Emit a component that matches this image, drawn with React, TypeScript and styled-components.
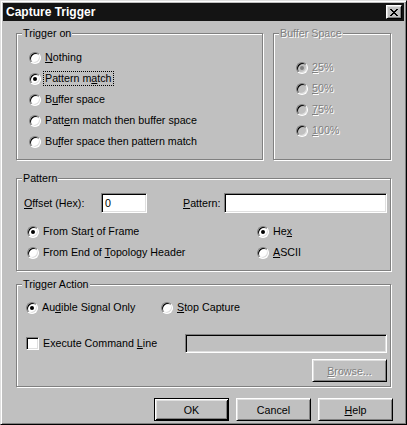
import React from "react";
import styled, { createGlobalStyle, css } from "styled-components";

const Global = createGlobalStyle`
  html, body { margin: 0; padding: 0; background: #c0c0c0; }
  body { font-family: "Liberation Sans", Arial, sans-serif; font-size: 10.7px; color: #000; }
  * { box-sizing: border-box; }
`;

const Window = styled.div`
  width: 407px;
  height: 425px;
  background: #c0c0c0;
  border: 1px solid;
  border-color: #dfdfdf #000 #000 #dfdfdf;
  box-shadow: inset 1px 1px 0 #fff, inset -1px -1px 0 #808080;
  padding: 2px;
  display: flex;
  flex-direction: column;
`;

const TitleBar = styled.div`
  height: 18px;
  flex: none;
  background: #141414;
  display: flex;
  align-items: center;
  justify-content: space-between;
  padding: 0 2px 0 3px;
`;

const Title = styled.span`
  color: #fff;
  font-weight: bold;
  font-size: 12px;
  line-height: 18px;
`;

const CloseButton = styled.div`
  width: 16px;
  height: 14px;
  background: #c0c0c0;
  border: 1px solid;
  border-color: #fff #000 #000 #fff;
  box-shadow: inset 1px 1px 0 #dfdfdf, inset -1px -1px 0 #808080;
  display: flex;
  align-items: center;
  justify-content: center;
`;

const Body = styled.div`
  flex: 1;
  display: flex;
  flex-direction: column;
  padding: 12px 13px 3px 13px;
`;

const TopRow = styled.div`
  display: flex;
  gap: 10px;
`;

const Group = styled.div<{ $pad: string; $width?: number; $mt?: number }>`
  position: relative;
  border: 1px solid #808080;
  box-shadow: 1px 1px 0 #fff, inset 1px 1px 0 #fff;
  padding: ${(p) => p.$pad};
  ${(p) => (p.$width ? `width: ${p.$width}px; flex: none;` : "flex: 1;")}
  margin-top: ${(p) => p.$mt ?? 0}px;
`;

const Legend = styled.span<{ $disabled?: boolean }>`
  position: absolute;
  top: -7px;
  left: 5px;
  padding: 0 1px;
  background: #c0c0c0;
  line-height: 13px;
  ${(p) =>
    p.$disabled &&
    css`
      color: #808080;
      text-shadow: 1px 1px 0 #fff;
    `}
`;

const Option = styled.label<{ $disabled?: boolean; $width?: number }>`
  display: flex;
  align-items: center;
  gap: 4px;
  height: 21px;
  white-space: nowrap;
  ${(p) => (p.$width ? `width: ${p.$width}px; flex: none;` : "")}
  ${(p) =>
    p.$disabled &&
    css`
      color: #808080;
      text-shadow: 1px 1px 0 #fff;
    `}
`;

const RadioCircle = styled.span<{ $checked?: boolean; $disabled?: boolean }>`
  position: relative;
  flex: none;
  width: 12px;
  height: 12px;
  border-radius: 50%;
  background: ${(p) => (p.$disabled ? "#c0c0c0" : "#fff")};
  border: 1px solid;
  border-color: #808080 #fff #fff #808080;
  box-shadow: inset 1px 1px 0 #000, inset -1px -1px 0 #dfdfdf;
  &::after {
    content: "";
    display: ${(p) => (p.$checked ? "block" : "none")};
    position: absolute;
    left: 3px;
    top: 3px;
    width: 4px;
    height: 4px;
    border-radius: 50%;
    background: ${(p) => (p.$disabled ? "#808080" : "#000")};
  }
`;

const CheckBox = styled.span`
  flex: none;
  width: 13px;
  height: 13px;
  background: #fff;
  border: 1px solid;
  border-color: #808080 #fff #fff #808080;
  box-shadow: inset 1px 1px 0 #000, inset -1px -1px 0 #dfdfdf;
`;

const OptionText = styled.span<{ $focus?: boolean }>`
  line-height: 13px;
  padding: 0 1px;
  margin-left: -1px;
  ${(p) =>
    p.$focus &&
    css`
      outline: 1px dotted #000;
      outline-offset: 0;
    `}
`;

const FieldRow = styled.div`
  display: flex;
  align-items: center;
  height: 20px;
`;

const FieldLabel = styled.span<{ $width: number }>`
  width: ${(p) => p.$width}px;
  flex: none;
`;

const TextBox = styled.div<{ $width?: number; $disabled?: boolean; $height?: number }>`
  height: ${(p) => p.$height ?? 20}px;
  ${(p) => (p.$width ? `width: ${p.$width}px; flex: none;` : "flex: 1;")}
  background: ${(p) => (p.$disabled ? "#c0c0c0" : "#fff")};
  border: 1px solid;
  border-color: #808080 #fff #fff #808080;
  box-shadow: inset 1px 1px 0 #000, inset -1px -1px 0 #dfdfdf;
  padding: 0 3px;
  display: flex;
  align-items: center;
`;

const Spacer = styled.span<{ $w: number }>`
  width: ${(p) => p.$w}px;
  flex: none;
`;

const OptionGrid = styled.div`
  display: grid;
  grid-template-columns: 230px 1fr;
  margin: 8px 0 0 3px;
`;

const Line = styled.div<{ $mt?: number; $end?: boolean }>`
  display: flex;
  align-items: center;
  margin-top: ${(p) => p.$mt ?? 0}px;
  ${(p) => p.$end && "justify-content: flex-end;"}
`;

const Button = styled.button<{ $default?: boolean; $disabled?: boolean }>`
  width: 75px;
  height: 23px;
  flex: none;
  padding: 0;
  font: inherit;
  color: #000;
  background: #c0c0c0;
  border: 1px solid;
  border-color: #fff #000 #000 #fff;
  box-shadow: inset 1px 1px 0 #dfdfdf, inset -1px -1px 0 #808080;
  ${(p) =>
    p.$default &&
    css`
      border-color: #000;
      box-shadow: inset 1px 1px 0 #fff, inset -1px -1px 0 #000, inset 2px 2px 0 #dfdfdf,
        inset -2px -2px 0 #808080;
    `}
  ${(p) =>
    p.$disabled &&
    css`
      color: #808080;
      text-shadow: 1px 1px 0 #fff;
    `}
`;

const ButtonRow = styled.div`
  display: flex;
  justify-content: flex-end;
  gap: 7px;
  margin: 11px -2px 0 0;
`;

type RadioProps = {
  children: React.ReactNode;
  checked?: boolean;
  disabled?: boolean;
  focus?: boolean;
  width?: number;
};

const Radio = ({ children, checked, disabled, focus, width }: RadioProps) => (
  <Option $disabled={disabled} $width={width}>
    <RadioCircle $checked={checked} $disabled={disabled} />
    <OptionText $focus={focus}>{children}</OptionText>
  </Option>
);

const CloseGlyph = () => (
  <svg width="8" height="7" viewBox="0 0 8 7" shapeRendering="crispEdges">
    <path
      fill="#000"
      d="M0 0h2v1H0zM6 0h2v1H6zM1 1h2v1H1zM5 1h2v1H5zM2 2h4v1H2zM3 3h2v1H3zM2 4h4v1H2zM1 5h2v1H1zM5 5h2v1H5zM0 6h2v1H0zM6 6h2v1H6z"
    />
  </svg>
);

export default function App() {
  return (
    <>
      <Global />
      <Window>
        <TitleBar>
          <Title>Capture Trigger</Title>
          <CloseButton>
            <CloseGlyph />
          </CloseButton>
        </TitleBar>
        <Body>
          <TopRow>
            <Group $pad="13px 0 7px 12px" $width={247}>
              <Legend>Trigger on</Legend>
              <Radio>
                <u>N</u>othing
              </Radio>
              <Radio checked focus>
                Pattern m<u>a</u>tch
              </Radio>
              <Radio>
                B<u>u</u>ffer space
              </Radio>
              <Radio>
                Patt<u>e</u>rn match then buffer space
              </Radio>
              <Radio>
                Bu<u>f</u>fer space then pattern match
              </Radio>
            </Group>
            <Group $pad="23px 0 0 22px">
              <Legend $disabled>Buffer Space</Legend>
              <Radio checked disabled>
                <u>2</u>5%
              </Radio>
              <Radio disabled>
                <u>5</u>0%
              </Radio>
              <Radio disabled>
                <u>7</u>5%
              </Radio>
              <Radio disabled>
                <u>1</u>00%
              </Radio>
            </Group>
          </TopRow>

          <Group $pad="14px 3px 7px 7px" $mt={18}>
            <Legend>Pattern</Legend>
            <FieldRow>
              <FieldLabel $width={77}>
                <u>O</u>ffset (Hex):
              </FieldLabel>
              <TextBox $width={46}>0</TextBox>
              <Spacer $w={36} />
              <FieldLabel $width={41}>
                <u>P</u>attern:
              </FieldLabel>
              <TextBox />
            </FieldRow>
            <OptionGrid>
              <Radio checked>
                From Star<u>t</u> of Frame
              </Radio>
              <Radio checked>
                He<u>x</u>
              </Radio>
              <Radio>
                From End of <u>T</u>opology Header
              </Radio>
              <Radio>
                <u>A</u>SCII
              </Radio>
            </OptionGrid>
          </Group>

          <Group $pad="12px 3px 4px 9px" $mt={13}>
            <Legend>Trigger Action</Legend>
            <Line>
              <Radio checked width={135}>
                Au<u>d</u>ible Signal Only
              </Radio>
              <Radio>
                <u>S</u>top Capture
              </Radio>
            </Line>
            <Line $mt={15}>
              <Option $width={159}>
                <CheckBox />
                <OptionText>
                  Execute Command <u>L</u>ine
                </OptionText>
              </Option>
              <TextBox $disabled $height={19} />
            </Line>
            <Line $mt={5} $end>
              <Button $disabled>
                <u>B</u>rowse...
              </Button>
            </Line>
          </Group>

          <ButtonRow>
            <Button $default>OK</Button>
            <Button>Cancel</Button>
            <Button>
              <u>H</u>elp
            </Button>
          </ButtonRow>
        </Body>
      </Window>
    </>
  );
}
